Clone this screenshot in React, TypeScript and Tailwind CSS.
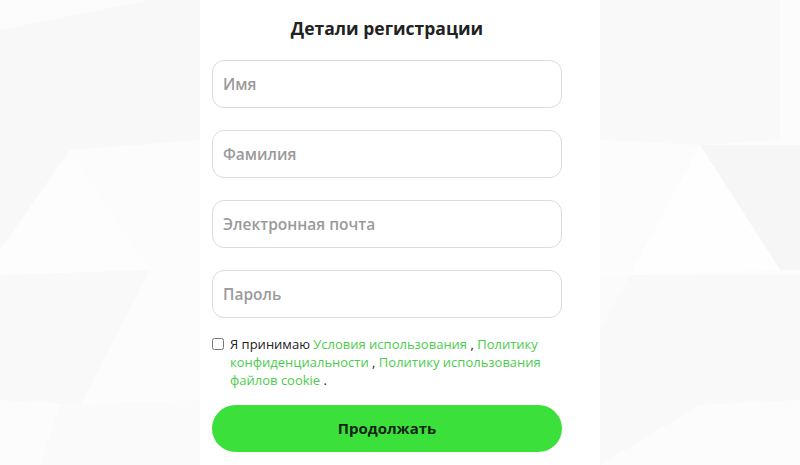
import React from 'react';

const fields = ['Имя', 'Фамилия', 'Электронная почта', 'Пароль'];

const Backdrop: React.FC = () => (
  <svg className="absolute inset-0 h-full w-full" viewBox="0 0 800 465" preserveAspectRatio="none" aria-hidden>
    <rect width="800" height="465" fill="#fcfcfc" />
    <polygon points="0,30 150,0 200,0 200,140 70,150 0,250" fill="#f8f8f8" />
    <polygon points="0,250 70,150 150,270 0,275" fill="#fdfdfd" />
    <polygon points="0,275 150,270 80,405 0,400" fill="#f9f9f9" />
    <polygon points="60,405 200,400 200,465 40,465" fill="#fafafa" />
    <polygon points="600,0 780,0 780,140 700,145 600,140" fill="#f9f9f9" />
    <polygon points="700,145 800,145 800,270 780,270" fill="#f6f6f6" />
    <polygon points="630,275 700,145 780,270" fill="#fefefe" />
    <polygon points="600,275 630,275 600,330" fill="#fbfbfb" />
    <polygon points="600,330 630,275 800,275 800,400 700,405 600,465" fill="#f9f9f9" />
  </svg>
);

export default function App() {
  return (
    <div className="relative h-[465px] w-[800px] overflow-hidden bg-white" style={{ fontFamily: '"Open Sans", "Liberation Sans", sans-serif' }}>
      <Backdrop />
      <div className="relative mx-auto flex h-full w-[400px] flex-col bg-white px-[12px] pt-[15px]">
        <h1 className="w-[350px] text-center text-[17.5px] font-bold leading-[26px] text-[#222]">Детали регистрации</h1>
        <form className="mt-[19px] flex w-[350px] flex-col gap-[22px]">
          {fields.map((f) => (
            <input
              key={f}
              placeholder={f}
              className="h-[48px] w-full rounded-[12px] border border-[#dcdcdc] bg-white px-[10px] text-[15.5px] font-semibold text-[#333] outline-none placeholder:text-[#9a9a9a]"
            />
          ))}
        </form>
        <div className="mt-[17px] flex w-[350px] items-start gap-[6px]">
          <input type="checkbox" className="mt-[3px] h-[12px] w-[12px] shrink-0 accent-[#3be03b]" />
          <p className="w-[325px] text-[13px] leading-[18px] text-[#222]">
            Я принимаю <a className="text-[#4ccc4c]">Условия использования</a> , <a className="text-[#4ccc4c]">Политику конфиденциальности</a> , <a className="text-[#4ccc4c]">Политику использования файлов cookie</a> .
          </p>
        </div>
        <button className="mt-[16px] h-[47px] w-[350px] rounded-full bg-[#3be03b] text-[15px] font-bold text-[#152515]">
          Продолжать
        </button>
      </div>
    </div>
  );
}
